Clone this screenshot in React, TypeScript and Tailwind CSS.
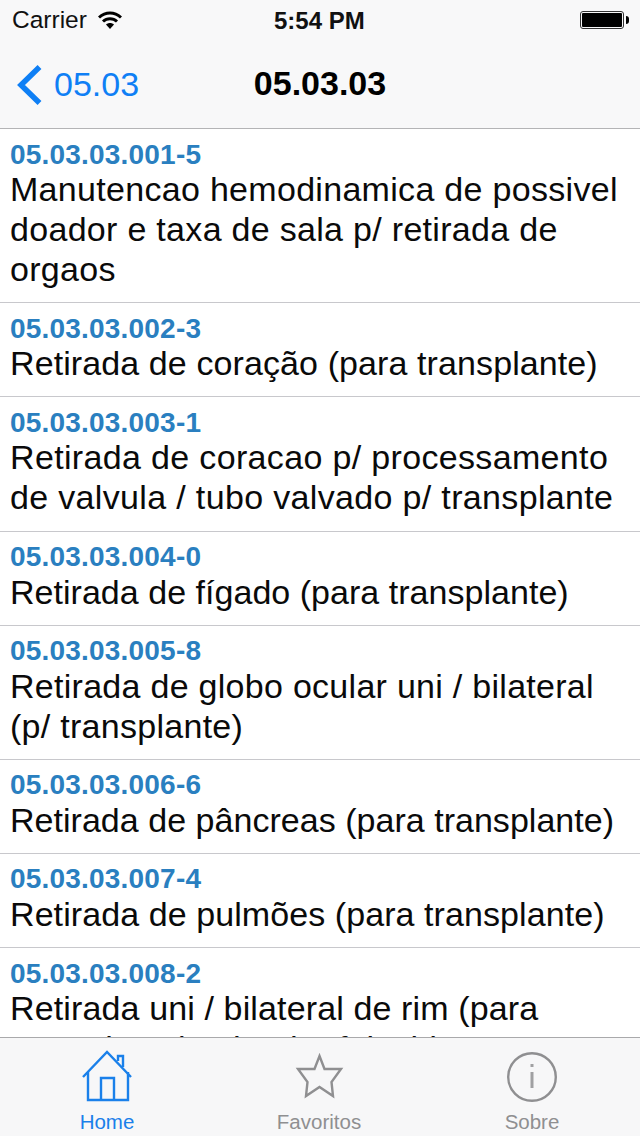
const rows = [
  { code: "05.03.03.001-5", text: "Manutencao hemodinamica de possivel doador e taxa de sala p/ retirada de orgaos", fit: "tracking-[0.3px]" },
  { code: "05.03.03.002-3", text: "Retirada de coração (para transplante)", fit: "tracking-[0.1px]" },
  { code: "05.03.03.003-1", text: "Retirada de coracao p/ processamento de valvula / tubo valvado p/ transplante", fit: "tracking-[0.34px]" },
  { code: "05.03.03.004-0", text: "Retirada de fígado (para transplante)", fit: "tracking-[0.03px]" },
  { code: "05.03.03.005-8", text: "Retirada de globo ocular uni / bilateral (p/ transplante)", fit: "tracking-[0.28px]" },
  { code: "05.03.03.006-6", text: "Retirada de pâncreas (para transplante)", fit: "tracking-[0.03px]" },
  { code: "05.03.03.007-4", text: "Retirada de pulmões (para transplante)", fit: "tracking-[0.08px]" },
  { code: "05.03.03.008-2", text: "Retirada uni / bilateral de rim (para transplante) - doador falecido", fit: "tracking-[0.13px]" },
];

export default function App() {
  return (
    <div className="flex h-[1136px] w-[640px] flex-col overflow-hidden bg-white font-['Liberation_Sans',Arial,sans-serif] text-black">
      <header className="flex h-[129px] shrink-0 flex-col border-b border-[#b4b4b6] bg-[#f8f8f9]">
        <div className="relative flex h-10 items-center justify-between pl-3 pr-[11px]">
          <div className="flex items-center gap-[11px]">
            <span className="text-[24.5px] leading-none text-[#111]">Carrier</span>
            <svg width="24" height="18" viewBox="0 0 24 18" fill="none" aria-hidden="true">
              <path d="M1 6.500 C7.500 0.500 16.500 0.500 23 6.500" stroke="#000" strokeWidth="3" />
              <path d="M5 10.500 C9 6.800 15 6.800 19 10.500" stroke="#000" strokeWidth="3" />
              <path d="M8 13.500 C10.300 11.500 13.700 11.500 16 13.500 L12 18 Z" fill="#000" />
            </svg>
          </div>
          <span className="absolute left-[274px] top-[8px] text-[24px] font-bold leading-[26px] text-[#111]">5:54 PM</span>
          <div className="flex items-center gap-[2px]">
            <div className="h-[18px] w-[44px] rounded-[3px] border border-[#333] bg-[#f8f8f9] p-[1px]">
              <div className="h-full rounded-[1px] bg-black" />
            </div>
            <div className="h-[8px] w-[3px] rounded-r-sm bg-black" />
          </div>
        </div>
        <div className="relative flex h-[88px] items-center justify-center">
          <div className="absolute left-[16px] top-[24px] flex items-center gap-[11px]">
            <svg width="27" height="42" viewBox="0 0 27 42" fill="none" aria-hidden="true">
              <path d="M23.5 3 L5 21 L23.5 39" stroke="#0f7ff5" strokeWidth="5.5" />
            </svg>
            <span className="-mt-[2px] text-[34px] leading-none text-[#0f7ff5]">05.03</span>
          </div>
          <h1 className="-mt-[2px] text-[34px] font-bold leading-none">05.03.03</h1>
        </div>
      </header>

      <main className="min-h-0 flex-1 overflow-hidden">
        {rows.map((r) => (
          <div key={r.code} className="border-b border-[#c8c8cc] pb-[13px] pl-[10px] pr-[10px] pt-[10.5px]">
            <div className="text-[28px] font-bold leading-[29.5px] tracking-[0.2px] text-[#2a7fc0]">{r.code}</div>
            <div className={`text-[34px] leading-[40.1px] text-[#0a0a0a] ${r.fit}`}>{r.text}</div>
          </div>
        ))}
      </main>

      <nav className="grid h-[99px] shrink-0 grid-cols-[214px_210px_216px] border-t border-[#a9a9ab] bg-[#f7f7f8]">
        <div className="flex flex-col items-center text-[#1a80ea]">
          <svg className="mt-[12px]" width="52" height="52" viewBox="0 0 52 52" fill="none" stroke="#1a80ea" strokeWidth="2.400" aria-hidden="true">
            <path d="M2 27 L26 2 L50 27" />
            <path d="M7 22 V50 H47 V22" />
            <path d="M20 50 V28 H33 V50" />
            <path d="M37 11 V6 H42 V17" />
          </svg>
          <span className="mt-[9px] text-[20.5px] leading-[22px]">Home</span>
        </div>
        <div className="flex flex-col items-center text-[#8f8f91]">
          <svg className="mt-[14px]" width="50" height="50" viewBox="0 0 50 50" fill="none" stroke="#8f8f91" strokeWidth="2.400" aria-hidden="true">
            <path d="M25.500 4 L30.500 17 L47 17 L37.500 30 L39 44 L25.500 35 L12 44 L13.500 30 L4 17 L20.500 17 Z" />
          </svg>
          <span className="mt-[9px] text-[20.5px] leading-[22px]">Favoritos</span>
        </div>
        <div className="flex flex-col items-center text-[#8f8f91]">
          <svg className="mt-[12px]" width="50" height="52" viewBox="0 0 50 52" fill="none" stroke="#8f8f91" strokeWidth="2.400" aria-hidden="true">
            <circle cx="25" cy="27" r="23.800" />
            <path d="M25 22 V38" stroke="#a0a0a2" strokeWidth="3" />
            <path d="M25 14 V17" stroke="#a0a0a2" strokeWidth="3" />
          </svg>
          <span className="mt-[9px] text-[20.5px] leading-[22px]">Sobre</span>
        </div>
      </nav>
    </div>
  );
}
